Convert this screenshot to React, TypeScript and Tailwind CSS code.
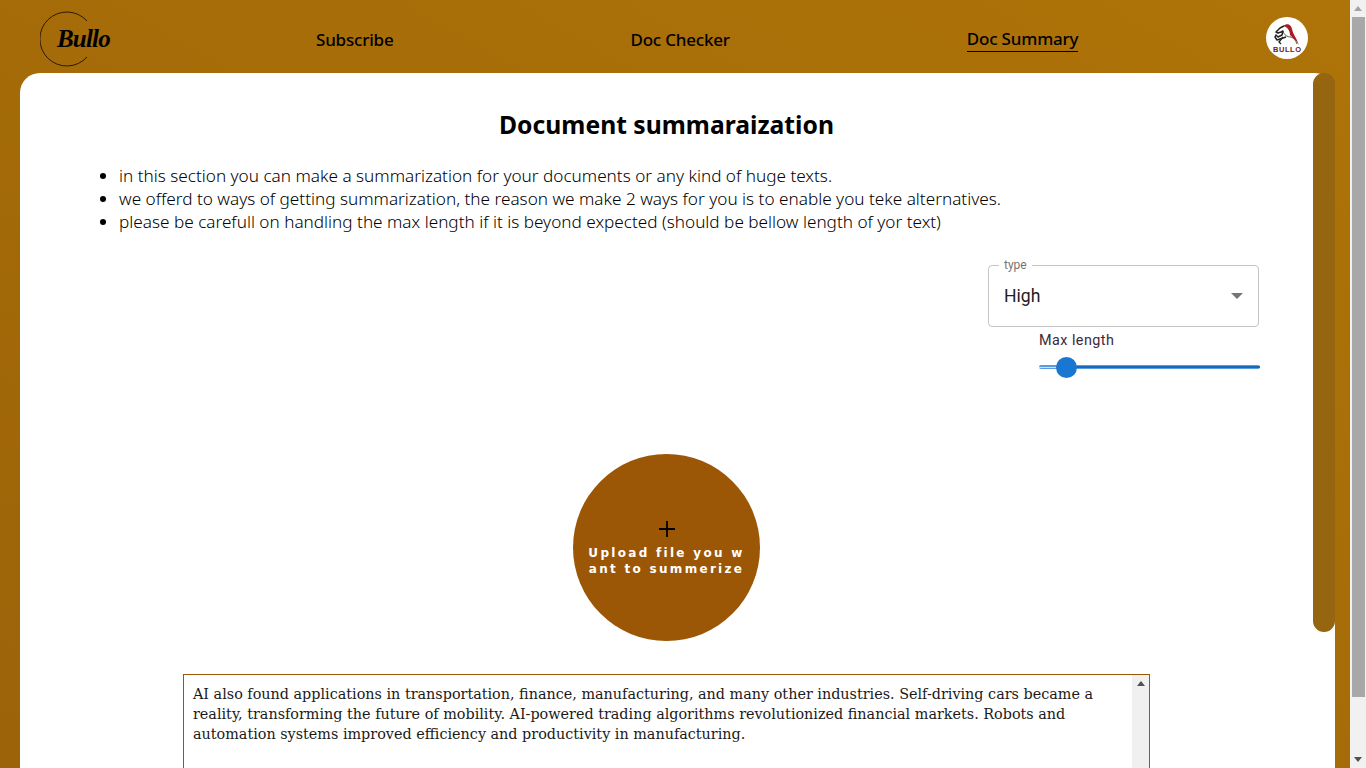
const NAV_TEXT = "font-['Noto_Sans',sans-serif] text-[17px] leading-[24px] font-medium tracking-[-0.2px] text-black";

const BULLETS = [
  "in this section you can make a summarization for your documents or any kind of huge texts.",
  "we offerd to ways of getting summarization, the reason we make 2 ways for you is to enable you teke alternatives.",
  "please be carefull on handling the max length if it is beyond expected (should be bellow length of yor text)",
];

function Logo() {
  return (
    <div className="relative w-[70px] h-[56px] flex items-center">
      <svg width="56" height="56" viewBox="0 0 56 56" fill="none" className="absolute left-0 top-0">
        <path d="M47 10 A27 27 0 1 0 47 46" stroke="#2b1a02" strokeWidth="1" />
      </svg>
      <span className="relative ml-[17px] font-['Liberation_Serif',serif] italic font-bold text-[25px] leading-none tracking-[-0.8px] text-black">
        Bullo
      </span>
    </div>
  );
}

function HorseBadge() {
  return (
    <div className="w-[42px] h-[42px] rounded-full bg-white flex flex-col items-center justify-center">
      <svg width="26" height="23" viewBox="0 0 26 23" fill="none">
        <path d="M9 3 C13 0 17 1 18 6 C19 11 22 14 25 22 C22 17 18 14 16 12 C16 8 14 4 9 3 Z" fill="#a81d22" />
        <path d="M10 3 L6 5 L2 9 L4 10 L7 9 L9 8 L8 12 L4 14 L2 12 L1 14 L3 17 L9 15 L12 14" stroke="#222" strokeWidth="1.5" strokeLinejoin="round" />
        <path d="M9 8 C10 12 13 14 17 14 C20 15 22 18 23 21" stroke="#444" strokeWidth="0.9" />
        <path d="M9 14 L5 19 L7 21" stroke="#222" strokeWidth="1.3" />
      </svg>
      <span className="font-['Liberation_Sans',sans-serif] font-bold text-[7.5px] leading-[7px] tracking-[0.6px] text-[#6b2020]">BULLO</span>
    </div>
  );
}

function Header() {
  return (
    <header className="h-[73px] shrink-0 flex items-center pl-[40px] pt-[4px]">
      <Logo />
      <a className={`ml-[206px] mt-[2px] ${NAV_TEXT}`}>Subscribe</a>
      <a className={`ml-[237px] mt-[2px] ${NAV_TEXT}`}>Doc Checker</a>
      <a className={`ml-[237px] mt-[2px] border-b border-black ${NAV_TEXT}`}>Doc Summary</a>
      <div className="ml-[188px] -mt-[1px]">
        <HorseBadge />
      </div>
    </header>
  );
}

function TypeSelect() {
  return (
    <div className="relative w-[271px] h-[62px] rounded-[4px] border border-[#c4c4c4] flex items-center justify-between pl-[15px] pr-[15px]">
      <span className="absolute -top-[8px] left-[10px] bg-white px-[5px] font-['Roboto',sans-serif] text-[12px] leading-[14px] text-[#757575]">
        type
      </span>
      <span className="font-['Roboto',sans-serif] text-[17.6px] leading-[24px] text-[#212121]">High</span>
      <svg width="12" height="6" viewBox="0 0 12 6">
        <path d="M0 0 H12 L6 6 Z" fill="#757575" />
      </svg>
    </div>
  );
}

function MaxLength() {
  return (
    <div className="w-[221px] -mr-[1px] mt-[4px]">
      <div className="font-['Roboto',sans-serif] text-[14.4px] leading-[20px] tracking-[0.45px] text-[#3a2a3a]">Max length</div>
      <div className="relative h-[20px] mt-[6px]">
        <div className="absolute left-0 right-0 top-[8px] h-[4px] rounded-full bg-[#5a9ce0]" />
        <div className="absolute left-[22px] right-0 top-[9px] h-[2px] bg-[#1a68b8]" />
        <div className="absolute left-0 w-[20px] top-[9.5px] h-[1px] bg-[#cfe2f5]" />
        <div className="absolute left-[17px] -top-[0.5px] w-[21px] h-[21px] rounded-full bg-[#1976d2]" />
      </div>
    </div>
  );
}

function UploadCircle() {
  return (
    <div className="w-[187px] h-[187px] rounded-full bg-[#9c5706] flex flex-col items-center">
      <svg width="16" height="16" viewBox="0 0 16 16" className="mt-[67px]">
        <path d="M8 0 V16 M0 8 H16" stroke="#000" strokeWidth="1.8" />
      </svg>
      <p className="mt-[8px] w-[162px] text-center break-all font-['DejaVu_Sans',sans-serif] font-bold text-[12px] leading-[16px] tracking-[2.3px] text-white">
        Upload file you want to summerize
      </p>
    </div>
  );
}

function TextPreview() {
  return (
    <div className="mx-auto mt-[33px] w-[967px] h-[300px] border border-[#9c5706] flex">
      <p className="flex-1 pl-[9px] pr-[20px] pt-[9px] font-['DejaVu_Serif',serif] text-[14.36px] leading-[20px] text-[#1a1a1a]">
        AI also found applications in transportation, finance, manufacturing, and many other industries. Self-driving cars became a reality, transforming the future of mobility. AI-powered trading algorithms revolutionized financial markets. Robots and automation systems improved efficiency and productivity in manufacturing.
      </p>
      <div className="w-[17px] shrink-0 bg-[#f0f0f0] flex justify-center pt-[6px]">
        <svg width="8" height="5" viewBox="0 0 8 5">
          <path d="M0 5 L4 0 L8 5 Z" fill="#505050" />
        </svg>
      </div>
    </div>
  );
}

function PageScrollbar() {
  return (
    <div className="w-[16px] shrink-0 bg-[#f1f1f1] flex flex-col items-center">
      <div className="h-[17px] flex items-center">
        <svg width="8" height="5" viewBox="0 0 8 5">
          <path d="M0 5 L4 0 L8 5 Z" fill="#a3a3a3" />
        </svg>
      </div>
      <div className="w-[13px] h-[680px] bg-[#a8a8a8]" />
      <div className="flex-1 flex items-end pb-[6px]">
        <svg width="8" height="5" viewBox="0 0 8 5">
          <path d="M0 0 L4 5 L8 0 Z" fill="#505050" />
        </svg>
      </div>
    </div>
  );
}

export default function App() {
  return (
    <div className="h-[768px] overflow-hidden flex">
      <div className="flex-1 min-w-0 flex flex-col bg-linear-to-bl from-[#ae7408] to-[#9c6309]">
        <Header />
        <div className="flex-1 min-h-0 ml-[20px] mr-[15px] bg-white rounded-t-[20px] flex">
          <main className="flex-1 min-w-0 pt-[35px]">
            <h1 className="text-center font-['Noto_Sans',sans-serif] font-bold text-[24.7px] leading-[34px] text-black">
              Document summaraization
            </h1>
            <ul className="mt-[22px] ml-[99px] list-disc font-['Noto_Sans',sans-serif] font-[350] text-[17.17px] leading-[23px] text-black">
              {BULLETS.map((b) => (
                <li key={b}>{b}</li>
              ))}
            </ul>
            <div className="mt-[32px] mr-[54px] flex flex-col items-end">
              <TypeSelect />
              <MaxLength />
            </div>
            <div className="mt-[77px] flex justify-center">
              <UploadCircle />
            </div>
            <TextPreview />
          </main>
          <div className="w-[22px] h-[559px] shrink-0 rounded-[11px] bg-[#966510]" />
        </div>
      </div>
      <PageScrollbar />
    </div>
  );
}
